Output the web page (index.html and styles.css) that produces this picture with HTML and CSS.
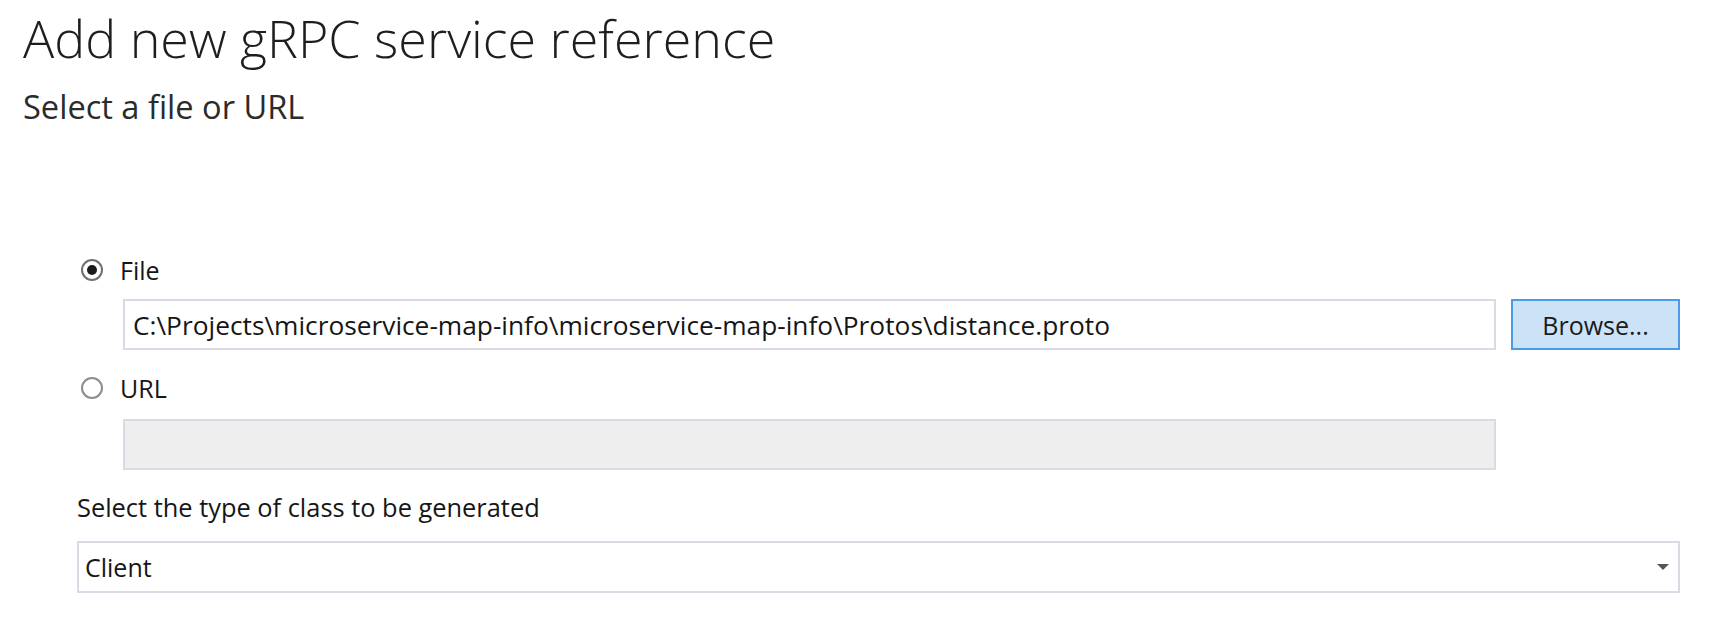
FILE: index.html
```html
<!DOCTYPE html>
<html lang="en">
<head>
<meta charset="utf-8">
<title>Add new gRPC service reference</title>
<link rel="stylesheet" href="styles.css">
</head>
<body>
<div class="page">
  <h1 class="title">Add new gRPC service reference</h1>
  <p class="subtitle">Select a file or URL</p>

  <div class="form">
    <div class="radio-row row-file">
      <span class="radio checked"><span class="dot"></span></span>
      <span class="radio-label">File</span>
    </div>
    <div class="field-row row-file-input">
      <div class="input path">C:\Projects\microservice-map-info\microservice-map-info\Protos\distance.proto</div>
      <div class="button">Browse...</div>
    </div>
    <div class="radio-row row-url">
      <span class="radio"></span>
      <span class="radio-label">URL</span>
    </div>
    <div class="field-row row-url-input">
      <div class="input disabled"></div>
    </div>
    <div class="select-label">Select the type of class to be generated</div>
    <div class="select">
      <span class="select-value">Client</span>
      <svg class="select-arrow" width="12" height="6" viewBox="0 0 12 6"><path d="M0 0 H12 L6 6 Z" fill="#555"/></svg>
    </div>
  </div>
</div>
</body>
</html>
```
FILE: styles.css
```css
html, body {
  margin: 0;
  padding: 0;
  background: #ffffff;
}

body {
  font-family: "Open Sans", "Noto Sans", sans-serif;
  color: #161616;
}

.page {
  padding-left: 23px;
}

.title {
  margin: 8px 0 0 0;
  font-size: 52px;
  line-height: 60px;
  font-weight: 300;
  color: #1e1e1e;
}

.subtitle {
  margin: 19px 0 0 0;
  font-size: 32.6px;
  line-height: 40px;
  font-weight: 400;
  color: #2b2b2b;
}

.form {
  margin-left: 54px;
  width: 1603px;
  font-size: 25px;
}

.radio-row {
  display: flex;
  align-items: center;
  height: 24px;
  line-height: 24px;
}

.row-file {
  margin-top: 131px;
}

.row-url {
  margin-top: 26px;
}

.radio {
  box-sizing: border-box;
  width: 22px;
  height: 22px;
  margin-left: 4px;
  border: 2px solid #8c8c8c;
  border-radius: 50%;
  display: flex;
  align-items: center;
  justify-content: center;
  background: #fff;
}

.radio.checked {
  border-color: #707070;
}

.dot {
  width: 10px;
  height: 10px;
  border-radius: 50%;
  background: #1b1b1b;
}

.radio-label {
  margin-left: 17px;
}

.field-row {
  display: grid;
  grid-template-columns: 1fr 169px;
  column-gap: 15px;
  margin-left: 46px;
}

.row-file-input {
  margin-top: 17px;
}

.row-url-input {
  margin-top: 19px;
}

.input {
  box-sizing: border-box;
  height: 51px;
  border: 2px solid #d9dae4;
  background: #fff;
  padding: 0 8px;
  display: flex;
  align-items: center;
  white-space: nowrap;
  overflow: hidden;
}

.input.path {
  font-size: 26.3px;
}

.input.disabled {
  background: #eeeeee;
}

.button {
  box-sizing: border-box;
  height: 51px;
  border: 2px solid #4a9be8;
  background: #cce2f7;
  display: flex;
  align-items: center;
  justify-content: center;
  color: #1b1b1b;
}

.select-label {
  margin-top: 25px;
  line-height: 24px;
  font-size: 25.4px;
}

.select {
  box-sizing: border-box;
  margin-top: 22px;
  height: 52px;
  border: 2px solid #d9dae4;
  background: #fff;
  display: flex;
  align-items: center;
  justify-content: space-between;
  padding: 0 9px 0 6px;
}

.select-arrow {
  display: block;
}
```
